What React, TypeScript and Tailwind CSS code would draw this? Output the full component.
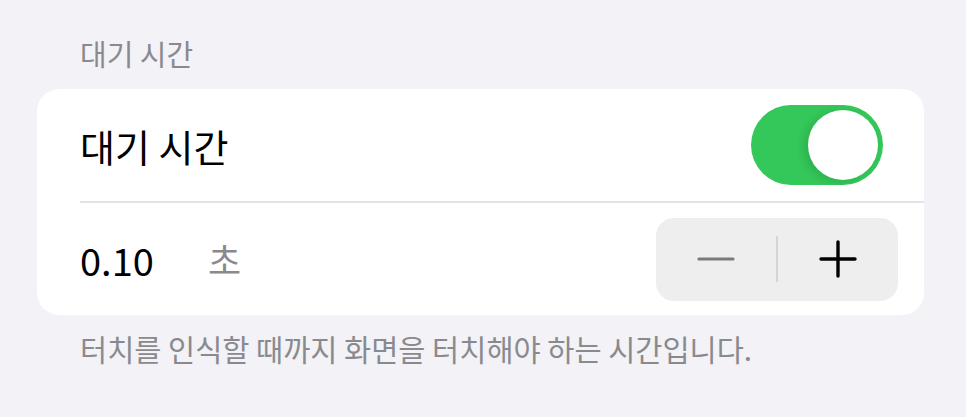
const font = { fontFamily: '"Noto Sans CJK KR", "Noto Sans", sans-serif' };

function Toggle({ on }: { on: boolean }) {
  return (
    <div
      className={`flex h-[80px] w-[132px] items-center rounded-full p-[5px] ${
        on ? "justify-end bg-[#34c759]" : "justify-start bg-[#e9e9ea]"
      }`}
    >
      <div className="h-[70px] w-[70px] rounded-full bg-white shadow-[-4px_2px_8px_rgba(0,0,0,0.12)]" />
    </div>
  );
}

function Stepper() {
  return (
    <div className="flex h-[83px] w-[242px] items-center rounded-[18px] bg-[#eeeeef]">
      <button className="flex flex-1 items-center justify-center text-[#7a7a7e]">
        <svg width="38" height="38" viewBox="0 0 38 38" fill="none">
          <line x1="2" y1="19" x2="36" y2="19" stroke="currentColor" strokeWidth="3.2" strokeLinecap="round" />
        </svg>
      </button>
      <div className="h-[46px] w-[2px] bg-[#d5d5d8]" />
      <button className="flex flex-1 items-center justify-center text-black">
        <svg width="38" height="38" viewBox="0 0 38 38" fill="none">
          <line x1="2" y1="19" x2="36" y2="19" stroke="currentColor" strokeWidth="3.4" strokeLinecap="round" />
          <line x1="19" y1="2" x2="19" y2="36" stroke="currentColor" strokeWidth="3.4" strokeLinecap="round" />
        </svg>
      </button>
    </div>
  );
}

export default function App() {
  return (
    <div
      className="h-[417px] w-[966px] bg-[#f2f2f7] pl-[37px] pr-[42px] pt-[33px]"
      style={font}
    >
      <p className="px-[43px] text-[29px] leading-[40px] text-[#8a8a8e]">대기 시간</p>

      <div className="mt-[16px] overflow-hidden rounded-[22px] bg-white">
        <div className="flex h-[112px] items-center justify-between pl-[43px] pr-[41px]">
          <span className="text-[38px] text-black">대기 시간</span>
          <Toggle on />
        </div>
        <div className="ml-[43px] h-[2px] bg-[#e3e3e6]" />
        <div className="flex h-[112px] items-center justify-between pl-[43px] pr-[26px]">
          <div className="flex items-center">
            <span className="w-[128px] text-[38px] text-black">0.10</span>
            <span className="text-[36px] text-[#8a8a8e]">초</span>
          </div>
          <Stepper />
        </div>
      </div>

      <p className="mt-[13px] px-[43px] text-[29.5px] leading-[40px] text-[#8a8a8e]">
        터치를 인식할 때까지 화면을 터치해야 하는 시간입니다.
      </p>
    </div>
  );
}
